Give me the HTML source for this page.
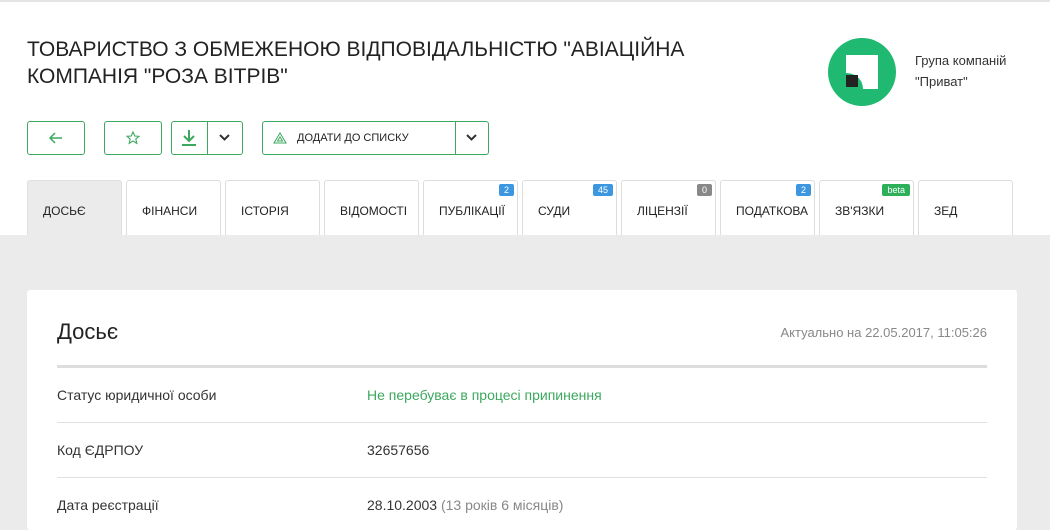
<!DOCTYPE html>
<html><head><meta charset="utf-8"><style>
*{box-sizing:border-box;margin:0;padding:0}
body{width:1050px;height:521px;overflow:hidden;background:#ebebeb;font-family:"Liberation Sans",Arial,sans-serif;color:#222;position:relative}
.top{position:absolute;left:0;top:0;width:1050px;height:235px;background:#fff}
.tl{position:absolute;left:0;top:0;width:1050px;height:2px;background:#e4e4e4}
h1{position:absolute;left:27px;top:36px;font-size:21px;font-weight:normal;line-height:27px;color:#222}
.logo{position:absolute;left:828px;top:38px;width:68px;height:68px;border-radius:50%;background:#1fb971}
.grp{position:absolute;left:915px;top:50px;font-size:13px;line-height:21px;color:#333}
.btn{position:absolute;top:121px;height:34px;border:1px solid #3ca85e;border-radius:3px;background:#fff;display:flex;align-items:center;justify-content:center}
.sep{position:absolute;top:0;bottom:0;width:1px;background:#3ca85e}
.tab{position:absolute;top:180px;height:55px;width:95px;border:1px solid #ddd;border-bottom:none;border-radius:3px 3px 0 0;background:#fff;font-size:12px;color:#222;padding:23px 0 0 15px;white-space:nowrap}
.tab.act{background:#ebebeb;border-color:#e0e0e0}
.b{position:absolute;top:3px;right:3px;height:12px;padding:0 5px;border-radius:2px;font-size:9px;line-height:12px;color:#fff;background:#3d97e0}
.card{position:absolute;left:27px;top:290px;width:990px;height:240px;background:#fff;border-radius:3px}
.row{position:absolute;left:30px;width:930px;font-size:14px;color:#333}
.hr{position:absolute;left:30px;width:930px;height:1px;background:#e0e0e0}
</style></head><body>
<div class="top">
<div class="tl"></div>
<h1>ТОВАРИСТВО З ОБМЕЖЕНОЮ ВІДПОВІДАЛЬНІСТЮ "АВІАЦІЙНА<br>КОМПАНІЯ "РОЗА ВІТРІВ"</h1>
<div class="logo"><svg width="68" height="68" viewBox="0 0 68 68"><path d="M18 17H50V51H35C35 42 28 35 18 35Z" fill="#fff"/><rect x="18" y="37" width="12" height="12" fill="#222"/></svg></div>
<div class="grp">Група компаній<br>"Приват"</div>
<div class="btn" style="left:27px;width:58px"><svg width="14" height="12" viewBox="0 0 14 12"><path d="M13 6H2M6 1L1 6l5 5" stroke="#3ca85e" stroke-width="1.5" fill="none"/></svg></div>
<div class="btn" style="left:104px;width:58px"><svg width="14" height="14" viewBox="0 0 14 14"><path d="M7 1l1.8 4 4.2.3-3.2 2.8 1 4.2L7 10l-3.8 2.3 1-4.2L1 5.3l4.2-.3z" stroke="#3ca85e" stroke-width="1.1" fill="none"/></svg></div>
<div class="btn" style="left:171px;width:72px;justify-content:flex-start"><svg style="margin-left:8px" width="18" height="18" viewBox="0 0 18 18"><path d="M9 1v10M4 7l5 5 5-5" stroke="#3ca85e" stroke-width="2" fill="none"/><path d="M2 16h14" stroke="#3ca85e" stroke-width="2"/></svg><div class="sep" style="left:35px"></div><svg style="position:absolute;left:47px;top:12px" width="11" height="8" viewBox="0 0 11 8"><path d="M1 1l4.5 4.5L10 1" stroke="#333" stroke-width="2" fill="none"/></svg></div>
<div class="btn" style="left:262px;width:227px;justify-content:flex-start;font-size:11px;color:#222"><svg style="margin:0 10px 0 10px" width="14" height="12" viewBox="0 0 14 12"><path d="M7 1L1 11h12z M7 5L4.5 9h5z" stroke="#3ca85e" stroke-width="1" fill="none"/></svg>ДОДАТИ ДО СПИСКУ<div class="sep" style="left:192px"></div><svg style="position:absolute;left:203px;top:12px" width="11" height="8" viewBox="0 0 11 8"><path d="M1 1l4.5 4.5L10 1" stroke="#333" stroke-width="2" fill="none"/></svg></div>
<div class="tab act" style="left:27px">ДОСЬЄ</div>
<div class="tab" style="left:126px">ФІНАНСИ</div>
<div class="tab" style="left:225px">ІСТОРІЯ</div>
<div class="tab" style="left:324px">ВІДОМОСТІ</div>
<div class="tab" style="left:423px">ПУБЛІКАЦІЇ<span class="b">2</span></div>
<div class="tab" style="left:522px">СУДИ<span class="b">45</span></div>
<div class="tab" style="left:621px">ЛІЦЕНЗІЇ<span class="b" style="background:#888">0</span></div>
<div class="tab" style="left:720px">ПОДАТКОВА<span class="b">2</span></div>
<div class="tab" style="left:819px">ЗВ'ЯЗКИ<span class="b" style="background:#2eb05a">beta</span></div>
<div class="tab" style="left:918px">ЗЕД</div>
</div>
<div class="card">
<div style="position:absolute;left:30px;top:29px;font-size:22px;color:#222">Досьє</div>
<div style="position:absolute;right:30px;top:35px;font-size:13px;color:#888">Актуально на 22.05.2017, 11:05:26</div>
<div class="hr" style="top:75px;height:3px;background:#ddd"></div>
<div class="row" style="top:97px">Статус юридичної особи<span style="position:absolute;left:310px;color:#3ca85e">Не перебуває в процесі припинення</span></div>
<div class="hr" style="top:132px"></div>
<div class="row" style="top:152px">Код ЄДРПОУ<span style="position:absolute;left:310px">32657656</span></div>
<div class="hr" style="top:187px"></div>
<div class="row" style="top:207px">Дата реєстрації<span style="position:absolute;left:310px">28.10.2003 <span style="color:#888">(13 років 6 місяців)</span></span></div>
</div>
</body></html>
